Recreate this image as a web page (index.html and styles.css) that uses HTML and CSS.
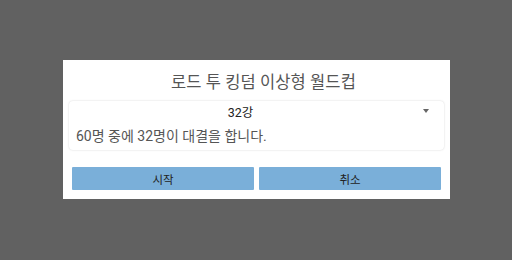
FILE: index.html
```html
<!DOCTYPE html>
<html lang="ko">
<head>
<meta charset="utf-8">
<link rel="stylesheet" href="styles.css">
</head>
<body>
<div class="overlay">
  <div class="dialog">
    <div class="title">로드 투 킹덤 이상형 월드컵</div>
    <div class="card">
      <div class="select">
        <span class="select-value">32강</span>
        <span class="arrow"></span>
      </div>
      <div class="desc">60명 중에 32명이 대결을 합니다.</div>
    </div>
    <div class="actions">
      <button class="btn">시작</button>
      <button class="btn">취소</button>
    </div>
  </div>
</div>
</body>
</html>
```
FILE: styles.css
```css
html, body {
  margin: 0;
  padding: 0;
  width: 512px;
  height: 260px;
  background: #616161;
  font-family: Roboto, "Noto Sans CJK KR", sans-serif;
  overflow: hidden;
}
.overlay {
  display: flex;
  justify-content: flex-start;
  padding: 60px 0 0 63px;
}
.dialog {
  width: 387px;
  height: 139px;
  background: #ffffff;
  box-sizing: border-box;
  padding: 0 6px;
  display: flex;
  flex-direction: column;
}
.title {
  height: 41px;
  display: flex;
  align-items: center;
  justify-content: center;
  padding-left: 14px;
  font-size: 16.5px;
  color: #555555;
  letter-spacing: 0.1px;
}
.card {
  height: 49px;
  box-sizing: border-box;
  border-radius: 4px;
  box-shadow: 0 0 2px rgba(0,0,0,0.18);
  padding: 0 7px;
  display: flex;
  flex-direction: column;
}
.select {
  height: 16px;
  display: grid;
  grid-template-columns: 1fr 32px;
  align-items: center;
}
.select-value {
  text-align: center;
  font-size: 12.5px;
  font-weight: 400;
  color: #222222;
  padding-top: 1px;
}
.arrow {
  justify-self: end;
  margin-right: 8px;
  width: 0;
  height: 0;
  border-left: 3.5px solid transparent;
  border-right: 3.5px solid transparent;
  border-top: 4px solid #666666;
}
.desc {
  margin-top: 8px;
  font-size: 14px;
  color: #555555;
}
.actions {
  margin-top: 17px;
  padding: 0 3px;
  display: flex;
  gap: 5px;
}
.btn {
  flex: 1;
  height: 23px;
  border: none;
  border-radius: 1px;
  background: #7aafd9;
  color: #222222;
  font-family: Roboto, "Noto Sans CJK KR", sans-serif;
  font-size: 11.5px;
  padding: 0;
}
```
